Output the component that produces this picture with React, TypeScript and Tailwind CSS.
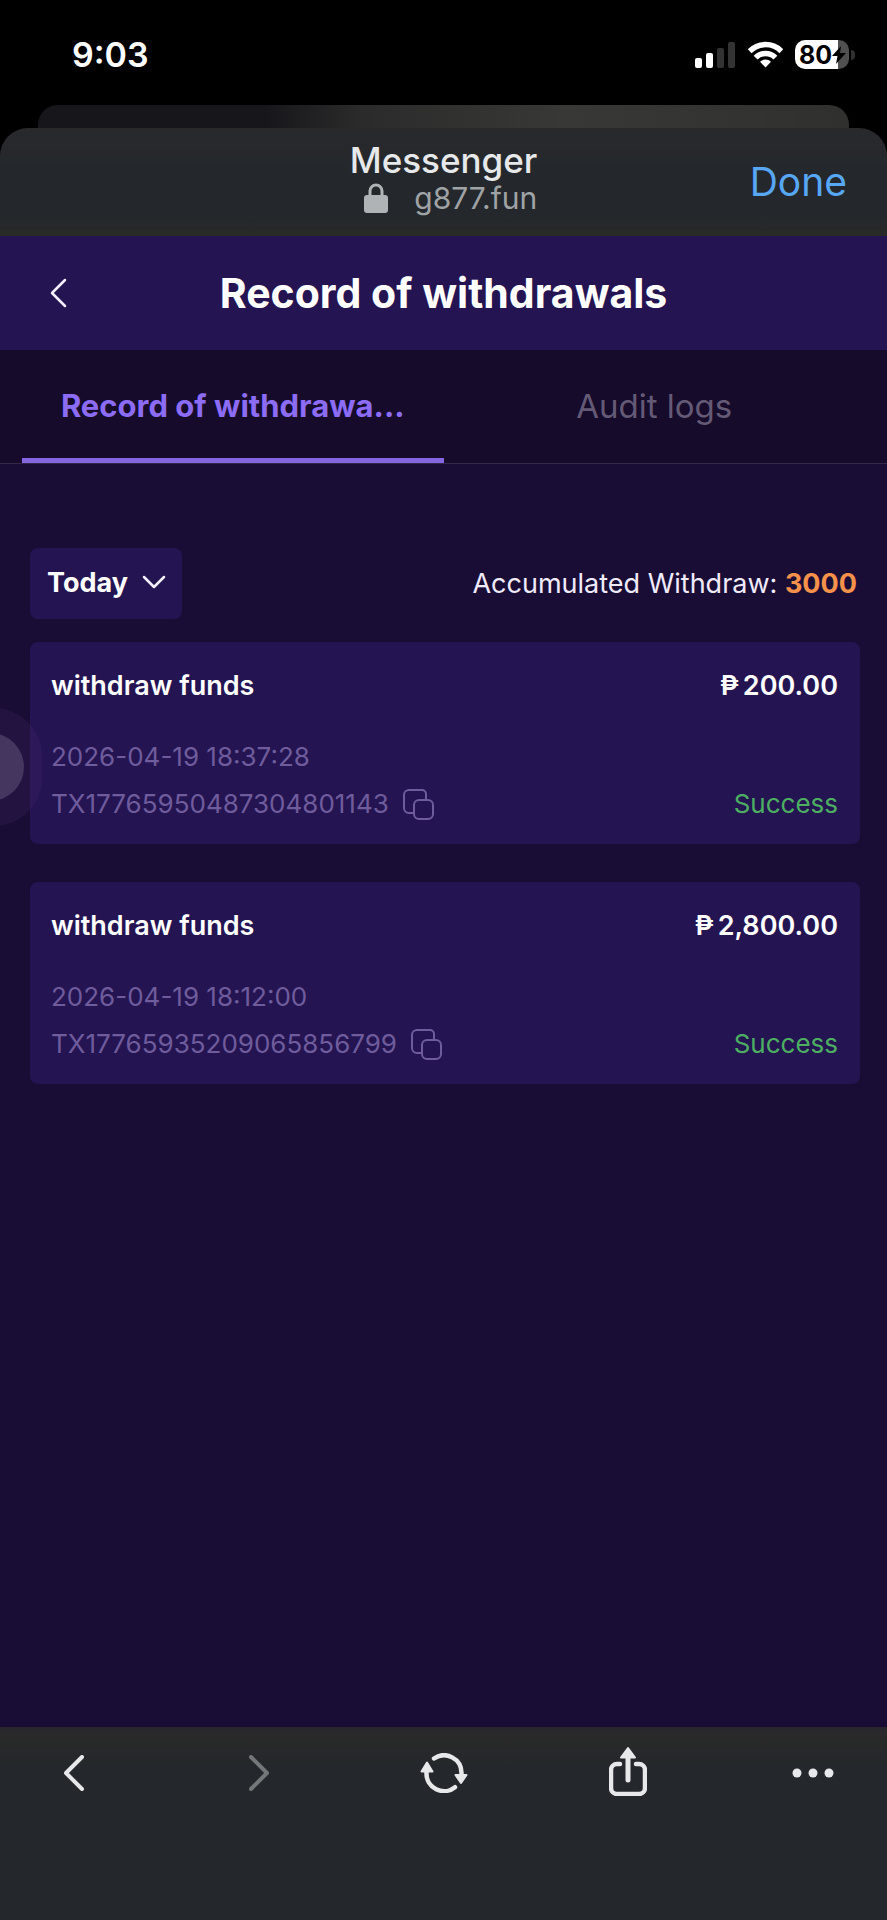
import React, { useState } from 'react';

interface WithdrawRecord {
  id: string;
  title: string;
  amount: string;
  time: string;
  status: string;
}

const records: WithdrawRecord[] = [
  { id: 'TX17765950487304801143', title: 'withdraw funds', amount: '200.00', time: '2026-04-19 18:37:28', status: 'Success' },
  { id: 'TX17765935209065856799', title: 'withdraw funds', amount: '2,800.00', time: '2026-04-19 18:12:00', status: 'Success' },
];

const tabs = ['Record of withdrawa...', 'Audit logs'];

const StatusBar: React.FC = () => (
  <div className="h-[105px] pt-1 pl-[72px] pr-8 flex items-center justify-between">
    <span className="text-[34px] leading-10 font-semibold">9:03</span>
    <div className="flex items-center gap-3">
      <svg width="41" height="26" viewBox="0 0 41 26" aria-hidden="true">
        <rect x="0" y="16" width="7" height="10" rx="2" fill="#fff" />
        <rect x="11" y="11" width="7" height="15" rx="2" fill="#fff" />
        <rect x="22" y="6" width="7" height="20" rx="2" fill="#333" />
        <rect x="33" y="0" width="7" height="26" rx="2" fill="#333" />
      </svg>
      <svg width="35" height="27" viewBox="0 0 35 27" aria-hidden="true">
        <g fill="none" stroke="#fff" strokeWidth="5.5">
          <path d="M1.600 10.200a22.500 22.500 0 0 1 31.800 0" />
          <path d="M7.600 16.600a14 14 0 0 1 19.800 0" />
        </g>
        <path d="M17.500 26.500 12 20.800a7.800 7.800 0 0 1 11 0z" fill="#fff" />
      </svg>
      <div className="flex items-center gap-[2px]">
        <div className="relative w-[54px] h-[29px] rounded-[10px] bg-[linear-gradient(90deg,#fff_80%,#505050_80%)] text-black flex items-center pl-1">
          <span className="text-[25px] leading-7 font-bold">80</span>
          <svg className="absolute right-[3px] top-[6px]" width="14" height="18" viewBox="0 0 14 18" aria-hidden="true">
            <path d="M9 0 0 10h5.500L4 18 14 7H8z" fill="#000" />
          </svg>
        </div>
        <span className="w-1 h-[10px] rounded-r-full bg-[#303030]" />
      </div>
    </div>
  </div>
);

const BrowserHeader: React.FC = () => (
  <div>
    <div className="h-[23px] mx-[38px] rounded-t-[20px] bg-[linear-gradient(90deg,#17171b_0%,#17171b_28%,#2b2b2b_40%,#383836_65%,#30302f_100%)]" />
    <header className="h-[108px] rounded-t-[28px] bg-[linear-gradient(180deg,#29292c,#24282c_40%,#24282c_80%,#292a28)] px-10 grid grid-cols-[1fr_auto_1fr] items-center">
      <span />
      <div className="text-center pb-2">
        <div className="text-[35px] leading-10 font-medium text-[#e6e8ea]">Messenger</div>
        <div className="flex items-center justify-end gap-[26px] text-[#a0a3a6]">
          <svg width="24" height="30" viewBox="0 0 24 30" aria-hidden="true">
            <rect x="0" y="12" width="24" height="18" rx="3" fill="#b0b3b5" />
            <path d="M6 13V8a6 6 0 0 1 12 0v5" fill="none" stroke="#b0b3b5" strokeWidth="3" />
          </svg>
          <span className="text-[30px] leading-9">g877.fun</span>
        </div>
      </div>
      <button className="justify-self-end text-[39px] leading-[44px] text-[#57a7f5]">Done</button>
    </header>
  </div>
);

const CopyIcon: React.FC = () => (
  <svg width="31" height="31" viewBox="0 0 31 31" fill="none" stroke="#6f5c9c" strokeWidth="2" aria-hidden="true">
    <path d="M10 24H6a5 5 0 0 1-5-5V6a5 5 0 0 1 5-5h13a4 4 0 0 1 4 4v5" />
    <rect x="11" y="11" width="19" height="19" rx="5" />
  </svg>
);

const RecordCard: React.FC<{ record: WithdrawRecord }> = ({ record }) => (
  <li className="rounded-lg bg-[#241452] pl-[21px] pr-[22px] pt-6 pb-4">
    <div className="flex justify-between text-[27px] leading-10 font-semibold">
      <span>{record.title}</span>
      <span className="flex gap-1"><span>₱</span><span>{record.amount}</span></span>
    </div>
    <div className="mt-7 text-[26px] leading-[46px] text-[#6f5c9c]">{record.time}</div>
    <div className="flex justify-between text-[26px] leading-[48px]">
      <div className="flex items-center gap-[14px] text-[#6f5c9c]">
        <span>{record.id}</span>
        <button aria-label="Copy"><CopyIcon /></button>
      </div>
      <span className="text-[#4caf61]">{record.status}</span>
    </div>
  </li>
);

const Toolbar: React.FC = () => (
  <nav className="h-[193px] bg-[linear-gradient(180deg,#292630,#292a28_5%,#24282c_20%)] px-11 pt-[18px] flex items-start justify-between">
    <button aria-label="Back" className="w-[60px] h-[56px] flex items-center justify-center">
      <svg width="20" height="36" viewBox="0 0 20 36" fill="none" stroke="#e6e8ea" strokeWidth="4" strokeLinecap="round" strokeLinejoin="round">
        <path d="M18 2 2 18l16 16" />
      </svg>
    </button>
    <button aria-label="Forward" className="w-[60px] h-[56px] flex items-center justify-center">
      <svg width="20" height="36" viewBox="0 0 20 36" fill="none" stroke="#74777a" strokeWidth="4" strokeLinecap="round" strokeLinejoin="round">
        <path d="m2 2 16 16L2 34" />
      </svg>
    </button>
    <button aria-label="Reload" className="w-[60px] h-[56px] flex items-center justify-center">
      <svg width="48" height="40" viewBox="0 0 48 40" fill="none" stroke="#e6e8ea" strokeWidth="4.500" strokeLinecap="round" strokeLinejoin="round">
        <path d="M14 5.500A17.500 17.500 0 0 1 41.500 20v3" />
        <path d="M35 34.200A17.500 17.500 0 0 1 6.500 20v-2" />
        <path d="M35.500 22h11L41 30z" fill="#e6e8ea" strokeWidth="2" />
        <path d="M1.500 18.500h11L7 9.500z" fill="#e6e8ea" strokeWidth="2" />
      </svg>
    </button>
    <button aria-label="Share" className="w-[60px] h-[52px] flex items-center justify-center">
      <svg width="38" height="50" viewBox="0 0 38 50" fill="none" stroke="#e6e8ea" strokeWidth="4.500" strokeLinecap="round" strokeLinejoin="round">
        <path d="M11 18H8a6 6 0 0 0-6 6v18a6 6 0 0 0 6 6h22a6 6 0 0 0 6-6V24a6 6 0 0 0-6-6h-3" />
        <path d="M19 34V10" strokeWidth="5" />
        <path d="M12 11.500h14L19 2z" fill="#e6e8ea" strokeWidth="2" />
      </svg>
    </button>
    <button aria-label="More" className="w-[60px] h-[56px] flex items-center justify-center">
      <svg width="42" height="10" viewBox="0 0 42 10" fill="#e6e8ea">
        <circle cx="5" cy="5" r="4.500" />
        <circle cx="21" cy="5" r="4.500" />
        <circle cx="37" cy="5" r="4.500" />
      </svg>
    </button>
  </nav>
);

const App: React.FC = () => {
  const [activeTab, setActiveTab] = useState(0);

  return (
    <div className="relative min-h-screen overflow-hidden flex flex-col bg-black text-white font-['Inter',sans-serif]">
      <StatusBar />
      <BrowserHeader />

      {/* Page title */}
      <div className="h-[114px] bg-[#241452] grid grid-cols-[88px_1fr_88px] items-center">
        <button aria-label="Go back" className="pl-[50px]">
          <svg width="17" height="30" viewBox="0 0 17 30" fill="none" stroke="#f4f0ff" strokeWidth="2.500" strokeLinecap="round" strokeLinejoin="round">
            <path d="M15 2 2 15l13 13" />
          </svg>
        </button>
        <h1 className="text-center text-[41px] leading-[48px] font-bold">Record of withdrawals</h1>
      </div>

      {/* Tabs */}
      <div className="h-[114px] bg-[#160b2b] border-b border-[#33274a] px-[22px] flex">
        {tabs.map((tab, i) => (
          <button
            key={tab}
            onClick={() => setActiveTab(i)}
            className={`flex-1 pt-1 leading-10 border-b-[5px] ${activeTab === i ? 'text-[31px] font-bold text-[#8c6cf5] border-[#8466e0]' : 'text-[33px] text-[#655a76] border-transparent'}`}
          >
            {tab}
          </button>
        ))}
      </div>

      {/* Records */}
      <main className="flex-1 bg-[#190d36] pl-[30px] pr-[27px] pt-[84px]">
        <div className="flex items-center justify-between mb-[23px]">
          <div className="relative">
            <select aria-label="Period" className="appearance-none w-[152px] h-[71px] rounded-lg bg-[#241452] pl-[17px] text-[27px] font-bold">
              <option>Today</option>
            </select>
            <svg className="absolute right-4 top-[27px] pointer-events-none" width="24" height="15" viewBox="0 0 24 15" fill="none" stroke="#f4f0ff" strokeWidth="2.500" strokeLinecap="round" strokeLinejoin="round">
              <path d="m2 2 10 10L22 2" />
            </svg>
          </div>
          <div className="pr-[3px] text-[27px] leading-10 text-[#f0ebfa]">
            Accumulated Withdraw: <span className="font-bold text-[#f5914b]">3000</span>
          </div>
        </div>
        <ul className="flex flex-col gap-[38px]">
          {records.map(record => (
            <RecordCard key={record.id} record={record} />
          ))}
        </ul>
      </main>

      <Toolbar />

      {/* Assistive touch, docked at the left edge */}
      <button aria-label="Assistive touch" className="absolute top-[708px] -left-[76px] w-[118px] h-[118px] rounded-[48px] bg-[#8050a0]/10 flex items-center justify-end pr-[18px]">
        <span className="w-[68px] h-[68px] rounded-full bg-[#44365f]" />
      </button>
    </div>
  );
};

export default App;
